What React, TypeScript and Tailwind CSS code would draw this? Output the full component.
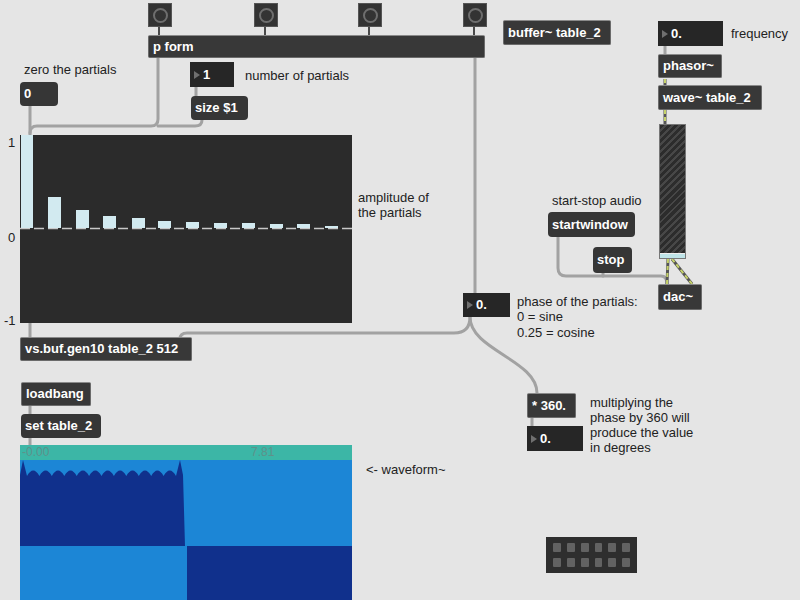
import React from 'react'

const font = "font-['Liberation_Sans',Arial,sans-serif]"

// bar tops inside the multislider (px from its top edge), zero line sits at 93
const partials = [
  { x: 1, top: 0 },
  { x: 28, top: 62 },
  { x: 56, top: 75 },
  { x: 83, top: 81 },
  { x: 112, top: 83 },
  { x: 138, top: 86 },
  { x: 166, top: 87 },
  { x: 194, top: 88 },
  { x: 222, top: 88 },
  { x: 250, top: 89 },
  { x: 277, top: 89 },
  { x: 305, top: 91 },
]

const ripplePath = () => {
  let d = 'M0 101 L0 30 L3 15 L7 31'
  const n = 12
  const start = 7
  const end = 156
  const step = (end - start) / n
  for (let i = 0; i < n; i++) {
    const x0 = start + i * step
    d += ` Q${(x0 + step / 2).toFixed(1)} 20 ${(x0 + step).toFixed(1)} 31`
  }
  d += ' L160 15 L163 30 L165 101 Z'
  return d
}

const Bang = ({ className }: { className: string }) => (
  <div className={`absolute w-[24px] h-[24px] bg-[#333] border border-[#555] flex items-center justify-center ${className}`}>
    <div className="w-[15px] h-[15px] rounded-full border-2 border-[#6e6e6e]" />
  </div>
)

const Obj = ({ className, children }: { className: string; children: React.ReactNode }) => (
  <div className={`absolute bg-[#383838] border border-[#6b6b6b] border-t-[#8a8a8a] rounded-[2px] flex items-center px-[4px] text-white text-[13px] font-bold whitespace-nowrap ${className}`}>
    {children}
  </div>
)

const Msg = ({ className, children }: { className: string; children: React.ReactNode }) => (
  <div className={`absolute bg-[#363636] rounded-[4px] flex items-center px-[4px] text-white text-[13px] font-bold whitespace-nowrap ${className}`}>
    {children}
  </div>
)

const Num = ({ className, children }: { className: string; children: React.ReactNode }) => (
  <div className={`absolute bg-[#262626] flex items-center pl-[3px] text-white text-[13px] font-bold whitespace-nowrap ${className}`}>
    <svg width="8" height="10" viewBox="0 0 8 10" className="mr-[2px]">
      <path d="M1 1 L7 5 L1 9 Z" fill="#6f6f6f" />
    </svg>
    {children}
  </div>
)

const Comment = ({ className, children }: { className: string; children: React.ReactNode }) => (
  <div className={`absolute text-[13px] leading-[15px] text-[#222] whitespace-nowrap ${className}`}>{children}</div>
)

export default function App() {
  return (
    <div className={`relative w-[800px] h-[600px] overflow-hidden bg-[#e5e5e5] ${font}`}>
      {/* patch cords */}
      <svg className="absolute inset-0" width="800" height="600">
        <g fill="none" stroke="#a2a2a2" strokeWidth="3" strokeLinecap="round">
          <path d="M30 106 V135" />
          <path d="M158 58 V119 Q158 126 151 126 H37 Q30 126 30 133" />
          <path d="M202 120 Q202 126 195 126 H158" />
          <path d="M196 87 V96" />
          <path d="M475 58 V293" />
          <path d="M470 317 Q470 333 454 333 H187 Q180 333 180 339" />
          <path d="M470 317 C470 350 537 360 537 393" />
          <path d="M30 323 V337" />
          <path d="M30 406 V414" />
          <path d="M30 438 V445" />
          <path d="M532 418 V426" />
          <path d="M665 46 V54" />
          <path d="M558 237 V268 Q558 276 566 276 H661 Q667 276 667 284" />
          <path d="M603 273 V276" />
        </g>
        <g stroke="#4a4a4a" strokeWidth="2">
          <path d="M159 26 V35" />
          <path d="M265 26 V35" />
          <path d="M369 26 V35" />
          <path d="M474 26 V35" />
        </g>
        <g fill="none" strokeWidth="3">
          <path d="M665 79 V85 M665 110 V124 M668 259 L667 284 M672 259 L692 284" stroke="#555" />
          <path d="M665 79 V85 M665 110 V124 M668 259 L667 284 M672 259 L692 284" stroke="#c6d26a" strokeDasharray="4 3" strokeWidth="2" />
        </g>
      </svg>

      {/* top row */}
      <Bang className="left-[148px] top-[3px]" />
      <Bang className="left-[254px] top-[3px]" />
      <Bang className="left-[358px] top-[3px]" />
      <Bang className="left-[463px] top-[3px]" />
      <Obj className="left-[148px] top-[35px] w-[337px] h-[23px] bg-[#2f2f2f]">p form</Obj>

      <Comment className="left-[24px] top-[62px]">zero the partials</Comment>
      <Msg className="left-[20px] top-[82px] w-[38px] h-[24px]">0</Msg>
      <Num className="left-[190px] top-[62px] w-[44px] h-[25px]">1</Num>
      <Comment className="left-[245px] top-[68px]">number of partials</Comment>
      <Msg className="left-[191px] top-[96px] w-[57px] h-[24px]">size $1</Msg>

      <Obj className="left-[503px] top-[20px] w-[108px] h-[25px]">buffer~ table_2</Obj>
      <Num className="left-[658px] top-[21px] w-[65px] h-[25px]">0.</Num>
      <Comment className="left-[731px] top-[26px]">frequency</Comment>
      <Obj className="left-[658px] top-[54px] w-[64px] h-[24px]">phasor~</Obj>
      <Obj className="left-[658px] top-[85px] w-[104px] h-[25px]">wave~ table_2</Obj>

      {/* meter */}
      <div className="absolute left-[659px] top-[124px] w-[27px] h-[135px] border border-[#777] bg-[repeating-linear-gradient(135deg,#2c2c2c_0px,#2c2c2c_3px,#474747_3px,#474747_5px)] flex flex-col justify-end">
        <div className="h-[5px] bg-[#bfe4e8] border-t border-[#eee]" />
      </div>

      <Comment className="left-[552px] top-[193px]">start-stop audio</Comment>
      <Msg className="left-[548px] top-[212px] w-[87px] h-[25px]">startwindow</Msg>
      <Msg className="left-[593px] top-[247px] w-[39px] h-[26px]">stop</Msg>
      <Obj className="left-[658px] top-[284px] w-[44px] h-[26px]">dac~</Obj>

      {/* multislider */}
      <Comment className="left-[8px] top-[135px]">1</Comment>
      <Comment className="left-[8px] top-[230px]">0</Comment>
      <Comment className="left-[4px] top-[313px]">-1</Comment>
      <div className="absolute left-[20px] top-[135px] w-[332px] h-[188px] bg-[#2b2b2b]">
        <svg width="332" height="188">
          <line x1="0" y1="93.5" x2="332" y2="93.5" stroke="#c8c8c8" strokeWidth="1.5" strokeDasharray="10 4" />
          {partials.map((p, i) => (
            <rect key={i} x={p.x} y={p.top} width={i === 0 ? 12 : 13} height={93 - p.top} fill="#d2eaf0" />
          ))}
        </svg>
      </div>
      <Comment className="left-[358px] top-[190px]">
        amplitude of
        <br />
        the partials
      </Comment>

      <Num className="left-[463px] top-[293px] w-[47px] h-[24px]">0.</Num>
      <Comment className="left-[517px] top-[294px]">
        phase of the partials:
        <br />0 = sine
        <br />
        <span className="block mt-[1px]">0.25 = cosine</span>
      </Comment>

      <Obj className="left-[20px] top-[337px] w-[172px] h-[24px]">vs.buf.gen10 table_2 512</Obj>
      <Obj className="left-[21px] top-[382px] w-[70px] h-[24px]">loadbang</Obj>
      <Msg className="left-[21px] top-[414px] w-[80px] h-[24px]">set table_2</Msg>

      {/* waveform~ */}
      <div className="absolute left-[20px] top-[445px] w-[332px] h-[155px] flex flex-col bg-[#1c86d6]">
        <div className="h-[15px] bg-[#3cb6a6] relative text-[12px] leading-[15px] text-[#5e918a]">
          <span className="absolute left-[2px] top-0">-0.00</span>
          <span className="absolute left-[231px] top-0">7.81</span>
        </div>
        <svg width="332" height="140" className="-mt-[0px]">
          <path d={ripplePath()} fill="#10308c" transform="translate(0 -15)" />
          <rect x="167" y="86" width="165" height="54" fill="#10308c" />
        </svg>
      </div>
      <Comment className="left-[366px] top-[462px]">&lt;- waveform~</Comment>

      <Obj className="left-[527px] top-[393px] w-[49px] h-[25px]">* 360.</Obj>
      <Num className="left-[527px] top-[426px] w-[56px] h-[25px]">0.</Num>
      <Comment className="left-[590px] top-[395px] leading-[15.5px]">
        multiplying the
        <br />
        phase by 360 will
        <br />
        produce the value
        <br />
        in degrees
      </Comment>

      {/* matrix */}
      <div className="absolute left-[546px] top-[537px] w-[91px] h-[36px] bg-[#2e2e2e] grid grid-cols-6 gap-x-[6px] gap-y-[6px] px-[7px] py-[6px]">
        {Array.from({ length: 12 }).map((_, i) => (
          <div key={i} className="bg-[#626262] rounded-[1px]" />
        ))}
      </div>
    </div>
  )
}
